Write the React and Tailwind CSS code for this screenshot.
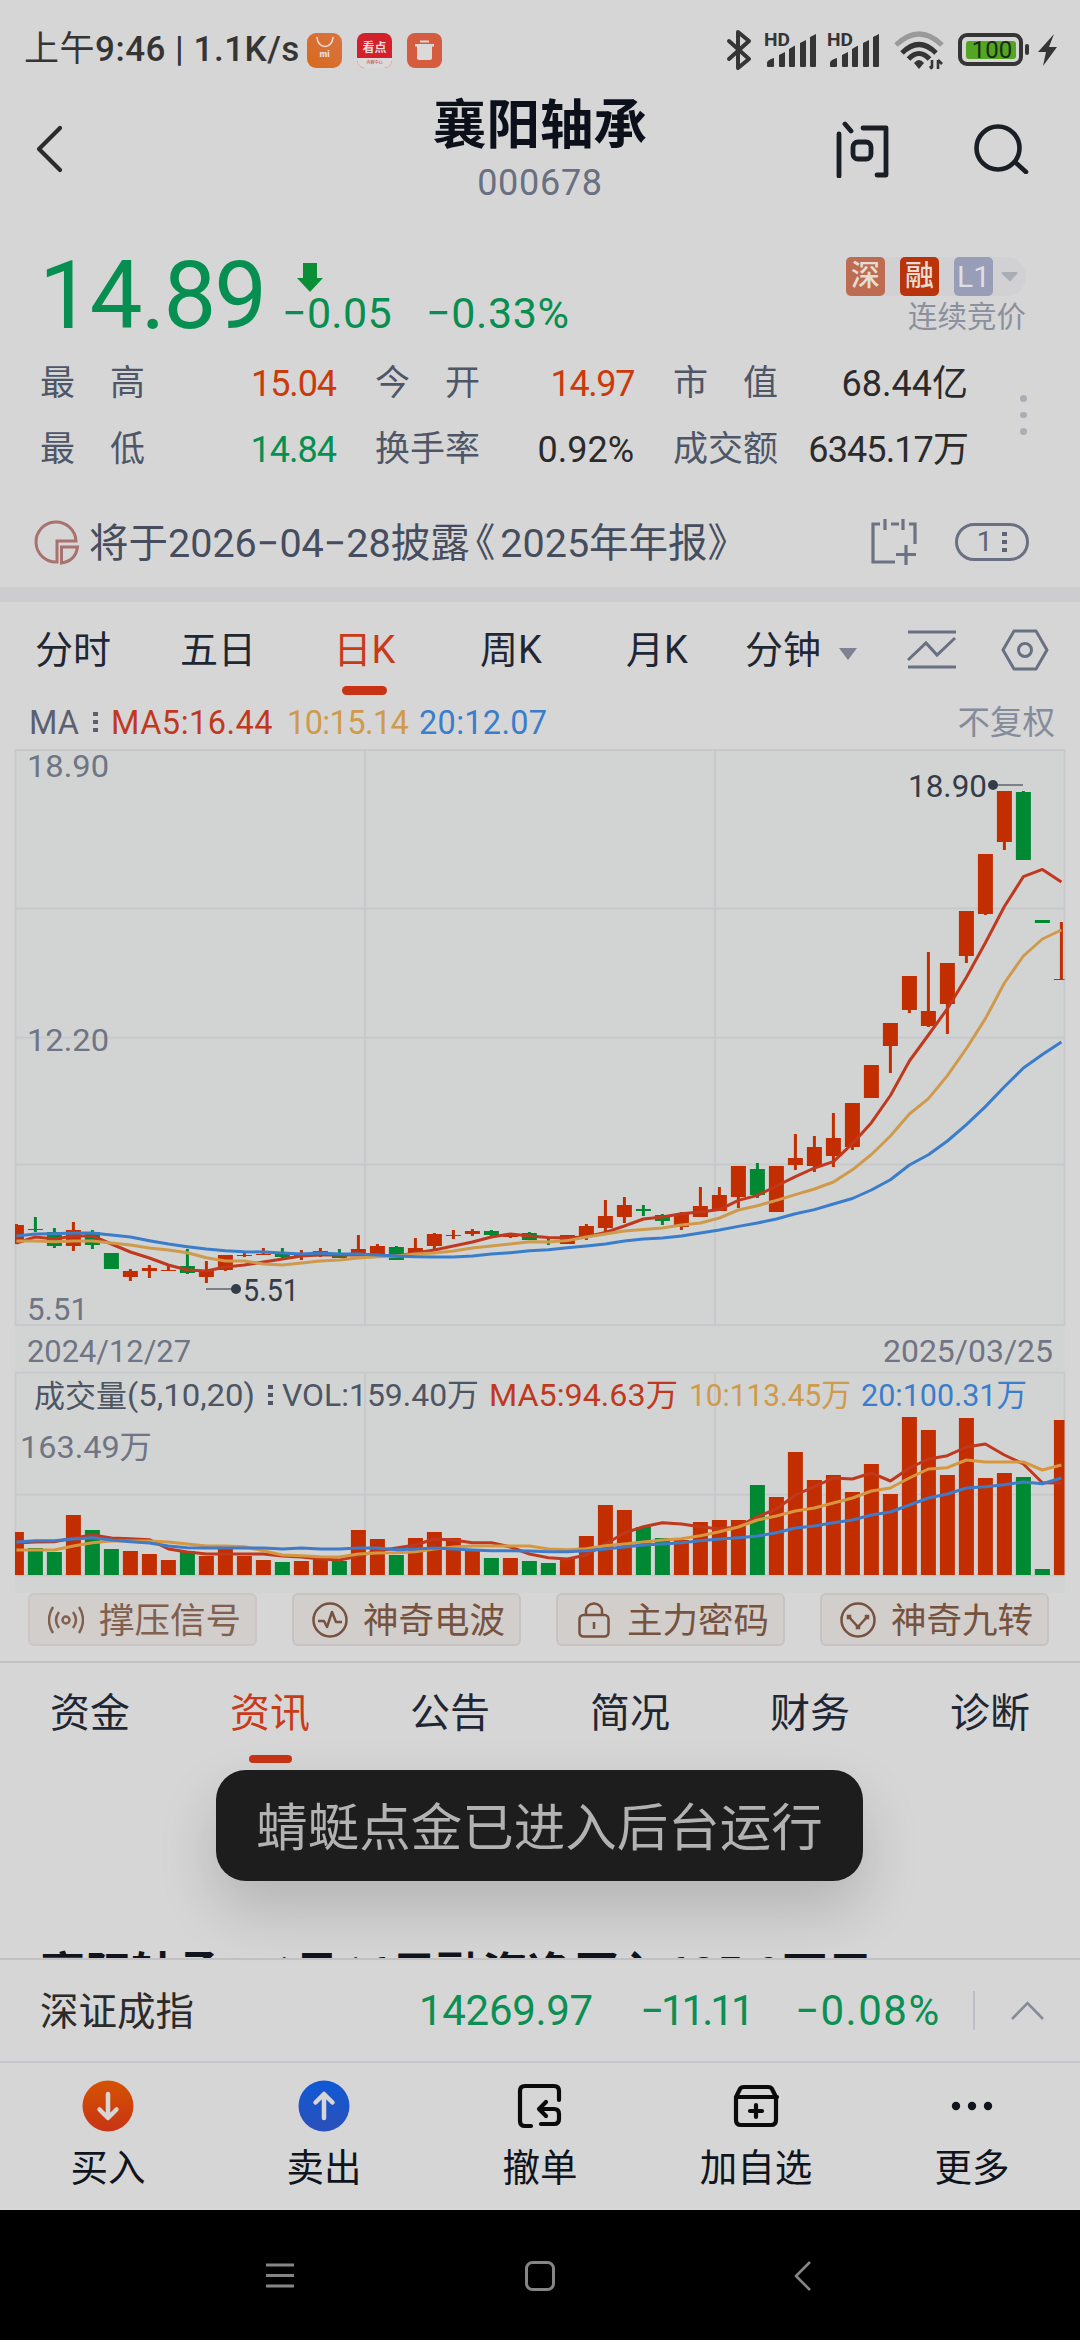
import React from "react";
import clsx from "clsx";

const RED = "#c22e00";
const GREEN = "#008833";

const STATS = [
  { label: "最　高", value: "15.04", tone: "text-[#cb3a0b] tracking-[-1.100px]" },
  { label: "今　开", value: "14.97", tone: "text-[#cb3a0b] tracking-[-1.400px]" },
  { label: "市　值", value: "68.44亿", tone: "text-[#2b2b2b]" },
  { label: "最　低", value: "14.84", tone: "text-[#068f50] tracking-[-1px]" },
  { label: "换手率", value: "0.92%", tone: "text-[#2b2b2b]" },
  { label: "成交额", value: "6345.17万", tone: "text-[#2b2b2b] tracking-[-0.900px]" },
];

// [up, wick top, body top, body bottom, wick bottom, volume top]
const BARS = [
  [1, 1224, 1225, 1241, 1244, 1532],
  [0, 1217, 1229, 1230, 1232, 1548],
  [0, 1228, 1232, 1246, 1248, 1552],
  [1, 1222, 1230, 1246, 1251, 1515],
  [0, 1230, 1232, 1245, 1249, 1530],
  [0, 1253, 1253, 1269, 1269, 1549],
  [1, 1269, 1271, 1277, 1281, 1551],
  [1, 1265, 1268, 1271, 1278, 1554],
  [1, 1265, 1270, 1271, 1271, 1560],
  [0, 1249, 1266, 1273, 1274, 1551],
  [1, 1261, 1271, 1277, 1283, 1556],
  [1, 1255, 1255, 1270, 1271, 1549],
  [1, 1253, 1255, 1256, 1257, 1556],
  [1, 1248, 1254, 1255, 1255, 1560],
  [0, 1248, 1252, 1257, 1258, 1562],
  [1, 1250, 1255, 1256, 1260, 1561],
  [1, 1248, 1251, 1253, 1257, 1558],
  [0, 1249, 1254, 1258, 1258, 1561],
  [1, 1235, 1249, 1255, 1255, 1530],
  [1, 1244, 1246, 1256, 1258, 1539],
  [0, 1246, 1247, 1260, 1260, 1555],
  [1, 1238, 1248, 1253, 1253, 1538],
  [1, 1233, 1234, 1246, 1250, 1532],
  [1, 1230, 1235, 1236, 1239, 1538],
  [1, 1229, 1231, 1234, 1236, 1551],
  [0, 1230, 1231, 1235, 1236, 1558],
  [1, 1234, 1234, 1237, 1238, 1558],
  [0, 1232, 1233, 1240, 1240, 1561],
  [0, 1238, 1241, 1242, 1245, 1563],
  [1, 1235, 1235, 1244, 1244, 1559],
  [1, 1224, 1226, 1237, 1240, 1536],
  [1, 1200, 1216, 1228, 1232, 1505],
  [1, 1197, 1205, 1217, 1223, 1510],
  [0, 1205, 1209, 1211, 1216, 1527],
  [0, 1214, 1215, 1221, 1225, 1538],
  [1, 1212, 1214, 1227, 1230, 1540],
  [1, 1187, 1206, 1217, 1217, 1522],
  [1, 1187, 1195, 1211, 1211, 1520],
  [1, 1166, 1166, 1197, 1208, 1520],
  [0, 1163, 1169, 1195, 1198, 1485],
  [1, 1166, 1166, 1212, 1212, 1497],
  [1, 1134, 1158, 1165, 1170, 1452],
  [1, 1136, 1147, 1166, 1172, 1480],
  [1, 1113, 1138, 1156, 1167, 1475],
  [1, 1103, 1103, 1147, 1150, 1492],
  [1, 1065, 1065, 1098, 1098, 1464],
  [1, 1023, 1023, 1046, 1073, 1494],
  [1, 976, 976, 1010, 1013, 1417],
  [1, 952, 1011, 1026, 1027, 1430],
  [1, 963, 963, 1004, 1034, 1475],
  [1, 911, 911, 956, 963, 1418],
  [1, 854, 854, 914, 915, 1478],
  [1, 791, 791, 842, 850, 1473],
  [0, 791, 792, 860, 860, 1477],
  [0, 920, 920, 923, 923, 1569],
  [1, 922, 979, 980, 980, 1420],
];

const PRICE_MA = {
  "#3a7dcb": [
    1236, 1234, 1233.7, 1233, 1233, 1235, 1237, 1240.7, 1244, 1246.7, 1249, 1250.7, 1251.7, 1252, 1253, 1254, 1253, 1254, 1254,
    1255, 1256, 1256.7, 1257, 1257, 1256, 1254, 1252.7, 1250.7, 1249.8, 1247.8, 1246, 1244, 1241, 1239, 1238, 1236, 1233, 1230,
    1226.4, 1223, 1219, 1213.8, 1209.6, 1204, 1198.5, 1190, 1179.7, 1165, 1154.8, 1141, 1124.6, 1106.6, 1086.7, 1068, 1054.6,
    1042,
  ],
  "#cf9a4b": [
    1241, 1241, 1241.7, 1241, 1241, 1243, 1245, 1248, 1250, 1252.7, 1257.7, 1261, 1261, 1264, 1265, 1263, 1261, 1260, 1258,
    1256.7, 1256, 1254, 1253, 1251, 1248, 1246, 1244, 1241.7, 1242, 1240.6, 1237, 1234, 1231, 1229.5, 1228, 1225, 1223, 1218,
    1210, 1205.7, 1200.4, 1194.6, 1189, 1182, 1169.8, 1154.5, 1136, 1114, 1098.6, 1075.6, 1048.5, 1018.6, 983, 956, 939, 930,
  ],
  "#c0391f": [
    1243, 1237, 1239, 1236, 1236, 1244, 1252, 1258, 1265, 1270, 1271, 1267, 1265, 1262, 1259, 1256, 1255, 1255, 1255, 1255,
    1256, 1253, 1250, 1246, 1242, 1237, 1234, 1236, 1237.6, 1238, 1236.7, 1232.5, 1226, 1219, 1217, 1213.8, 1212, 1209.6,
    1200.4, 1195.4, 1186, 1176.7, 1168, 1161.7, 1143.7, 1122.7, 1095.5, 1061, 1035, 1008.7, 977.3, 942.8, 906.5, 876.6, 869.4,
    882,
  ],
};

const VOLUME_MA = {
  "#c0391f": [
    1543, 1542, 1541.7, 1538, 1535, 1538, 1538.7, 1539.7, 1549, 1552, 1554, 1554, 1554, 1554, 1556, 1557, 1559, 1560, 1556,
    1551, 1548, 1545, 1539, 1540, 1542.7, 1542.7, 1547, 1554, 1557.7, 1559, 1555, 1544, 1533, 1526.7, 1522.7, 1524, 1526.7,
    1529, 1526.7, 1516.7, 1509, 1495, 1486.7, 1478, 1479, 1473, 1481, 1468, 1459, 1455.7, 1447, 1444, 1455, 1464, 1482.7, 1483,
  ],
  "#d6973f": [
    1550, 1550, 1550, 1546, 1542.7, 1541, 1541, 1541, 1542, 1544, 1546, 1546, 1546.7, 1550.7, 1555, 1555.7, 1556.7, 1557, 1554,
    1553, 1552.7, 1551.7, 1549, 1547, 1546, 1546, 1546, 1546, 1549, 1549.7, 1548.7, 1545.7, 1544, 1542, 1540, 1538.7, 1535.7,
    1531.7, 1527, 1520, 1516, 1511, 1508, 1503, 1498, 1491, 1488, 1478, 1469, 1467.7, 1460, 1462, 1462, 1462, 1470, 1465,
  ],
  "#3f7bc9": [
    1542, 1540.7, 1540.7, 1539, 1537.7, 1540, 1541.7, 1543, 1546, 1547.7, 1548, 1548, 1548, 1548, 1549, 1548, 1549, 1549, 1548,
    1548, 1549.7, 1549, 1548, 1549, 1550, 1550.7, 1550.7, 1551, 1551.7, 1551.7, 1550.7, 1549, 1547, 1545, 1544, 1542.7, 1540.7,
    1539, 1537.7, 1536, 1532.7, 1528, 1526, 1522.7, 1520, 1515, 1512, 1505, 1498, 1494, 1488, 1486.7, 1484.7, 1482, 1483.7,
    1478,
  ],
};

const barX = (i) => 16.4 + i * 19;
const toPoints = (ys) => ys.map((y, i) => `${barX(i)},${y}`).join(" ");

function Icon({ w, h, className, children, ...rest }) {
  return (
    <svg width={w} height={h} viewBox={`0 0 ${w} ${h}`} fill="none" className={clsx("block shrink-0", className)} {...rest}>
      {children}
    </svg>
  );
}

function Signal() {
  return (
    <Icon w={54} h={42} fill="#353535">
      <text x="0" y="17" fontSize="17.500" fontWeight="700" textLength="26" lengthAdjust="spacingAndGlyphs" fontFamily="Roboto, sans-serif">
        HD
      </text>
      <path d="M3 37v-3q0-3 7-5v8q0 1-1 1H4q-1 0-1-1zM15 37V26l6-3v14q0 1-1 1h-4q-1 0-1-1zM25 37V20l6-3.500v20.500q0 1-1 1h-4q-1 0-1-1zM36 37V14l6-3v26q0 1-1 1h-4q-1 0-1-1zM46 37V8l6-3v32q0 1-1 1h-4q-1 0-1-1z" />
    </Icon>
  );
}

function StatusBar() {
  return (
    <div className="flex h-[98px] items-center pl-[24px] pr-[23px] pt-[1px]">
      <span className="w-[283px] whitespace-nowrap text-[35px] leading-[44px] tracking-[0.500px] text-[#353535]">
        上午<span className="font-medium">9:46 | 1.1K/s</span>
      </span>
      <div className="mt-[2px] flex gap-[15px]">
        <div className="flex h-[35px] w-[35px] flex-col items-center rounded-[9px] bg-linear-to-tr from-[#d8691b] to-[#d9743f]">
          <Icon w={20} h={14} className="mt-[3px]" stroke="#ecdfd6" strokeWidth="1.600" strokeLinecap="round">
            <path d="M2 1.500c1 12 15 12 16 0" />
          </Icon>
          <span className="text-[9px] font-black leading-[8px] text-[#ecdfd6]">mi</span>
        </div>
        <div className="flex h-[35px] w-[35px] flex-col items-center overflow-hidden rounded-[8px] bg-[#d3202a]">
          <span className="mt-[6px] text-[12px] font-bold leading-[18px] text-[#f0dede]">看点</span>
          <span className="mt-[1px] w-full bg-[#dcdad9] text-center text-[4px] leading-[10px] text-[#c2272d]">内容中心</span>
        </div>
        <div className="flex h-[35px] w-[35px] items-center justify-center rounded-[8px] bg-[#d65c40]">
          <Icon w={23} h={23}>
            <path d="M7 1.500h9v2H7zM2 5h19v2.600H2z" fill="#dcdad9" />
            <path d="M4 7h15v12q0 2-2 2H6q-2 0-2-2z" fill="#dcdad9" />
          </Icon>
        </div>
      </div>
      <div className="ml-auto flex items-center">
        <Icon w={26} h={42} stroke="#353535" strokeWidth="4" strokeLinecap="round" strokeLinejoin="round">
          <path d="M3 12l20 18-11 9V3l11 9L3 30" />
        </Icon>
        <div className="ml-[12px] flex gap-[9px]">
          <Signal />
          <Signal />
        </div>
        <Icon w={50} h={40} className="ml-[13px]" strokeWidth="5">
          <path d="M2 15Q25-7 48 15" stroke="#9a9a9a" />
          <path d="M8 23Q25 6 42 23" stroke="#353535" />
          <path d="M14.500 29Q25 18 35.500 29" stroke="#353535" />
          <path d="M20 33q5-6 10 0l-5 6z" fill="#353535" />
          <path d="M38 30v8M36 36l2 3M44 39v-9M44 30l4 4" stroke="#353535" strokeWidth="2.600" />
        </Icon>
        <div className="ml-[14px] flex h-[33px] w-[65px] items-center justify-center rounded-[9px] border-4 border-[#353535]">
          <div className="h-[18px] w-[50px] rounded-[3px] bg-[#54a524] pl-[3px] text-center text-[24px] leading-[19px] text-[#182d10]">
            100
          </div>
        </div>
        <div className="ml-[2px] h-[11px] w-[4px] rounded-[2px] bg-[#353535]" />
        <Icon w={19} h={32} className="ml-[9px]">
          <path d="M16 0L0 18h8L5 32 19 13h-8z" fill="#353535" />
        </Icon>
      </div>
    </div>
  );
}

function Header() {
  return (
    <header className="grid h-[132px] grid-cols-[1fr_auto_1fr]">
      <Icon w={30} h={50} className="ml-[35px] mt-[26px]" stroke="#2b2b2b" strokeWidth="4.200" strokeLinecap="round" strokeLinejoin="round">
        <path d="M25 4L4 25l21 21" />
      </Icon>
      <div className="text-center">
        <h1 className="text-[53.500px] font-bold leading-[56px] text-[#0b101b]">襄阳轴承</h1>
        <p className="mt-[5px] text-[36px] leading-[48px] tracking-[0.700px] text-[#697082]">000678</p>
      </div>
      <div className="flex justify-end gap-[84px] pr-[51px] pt-[22px]">
        <Icon w={54} h={58} stroke="#1a1e25" strokeWidth="4.800" strokeLinecap="round" strokeLinejoin="round">
          <path d="M4 14v42M10 4l6 7M28 8h23v47H42" />
          <rect x="18" y="22" width="18" height="17" rx="5" />
        </Icon>
        <Icon w={56} h={54} stroke="#1a1e25" strokeWidth="4.600" strokeLinecap="round">
          <circle cx="25" cy="28" r="21.500" />
          <path d="M42 42l11 10" />
        </Icon>
      </div>
    </header>
  );
}

function Quote() {
  return (
    <section className="h-[357px] pt-[20px]">
      <div className="flex h-[101px] justify-between pl-[39px] pr-[54px]">
        <div className="flex text-[#068f50]">
          <span className="w-[243px] text-[94px] leading-[92px] tracking-[-2px]">14.89</span>
          <div className="pt-[13px]">
            <Icon w={26} h={29} className="ml-[15px]">
              <path d="M6 0h14v15h6L13 29 0 15h6z" fill="#0b8f36" />
            </Icon>
            <div className="flex text-[43px] leading-[42px]">
              <span className="w-[144px] tracking-[0.300px]">−0.05</span>
              <span className="tracking-[0.600px]">−0.33%</span>
            </div>
          </div>
        </div>
        <div className="pt-[7px]">
          <div className="flex items-center gap-[15px] rounded-r-full bg-[#d1d1d4]">
            <span className="flex h-[39px] w-[39px] items-center justify-center rounded-[5px] bg-[#bd6c51] text-[29px] font-medium text-[#e6dcd4]">深</span>
            <span className="flex h-[39px] w-[39px] items-center justify-center rounded-[5px] bg-[#b9330b] text-[29px] font-medium text-[#e6dcd4]">融</span>
            <span className="flex h-[39px] w-[39px] items-center justify-center rounded-[5px] bg-[#989db8] text-[30px] text-[#dedfe4]">L1</span>
            <Icon w={18} h={10} className="-ml-[7px] mr-[7px]">
              <path d="M1 0h15q1 1 0 2L9 9.500 1 2q-1-1 0-2z" fill="#a9adb6" />
            </Icon>
          </div>
          <p className="pt-[1px] text-right text-[29.500px] leading-[40px] text-[#8b909f]">连续竞价</p>
        </div>
      </div>
      <div className="flex items-center">
        <div className="grid grid-cols-[296px_259px_295px] gap-x-[39px] pl-[40px] text-[36px] leading-[66px]">
          {STATS.map((s) => (
            <div key={s.label} className="flex justify-between whitespace-nowrap">
              <span className="text-[35px] text-[#4e5667]">{s.label}</span>
              <span className={s.tone}>{s.value}</span>
            </div>
          ))}
        </div>
        <div className="-mt-[4px] ml-[52px] flex flex-col gap-[10px]">
          <i className="block size-[6.500px] rounded-full bg-[#a9adb6]" />
          <i className="block size-[6.500px] rounded-full bg-[#a9adb6]" />
          <i className="block size-[6.500px] rounded-full bg-[#a9adb6]" />
        </div>
      </div>
      <div className="mt-[26px] flex h-[66px] items-center pl-[34px] pr-[51px]">
        <Icon w={46} h={46} stroke="#a8736f" strokeWidth="3">
          <path d="M42 22A20 20 0 1 0 23 43V22z" />
          <path d="M27.500 28h16q-2 14-16 16z" />
        </Icon>
        <p className="ml-[9px] whitespace-nowrap pt-[3px] text-[39.500px] text-[#454d5e]">
          将于2026−04−28披露<span className="-ml-[14px] mr-[5px]">《</span>2025年年报》
        </p>
        <Icon w={46} h={46} className="ml-auto" stroke="#6b7283" strokeWidth="3.200">
          <path d="M9 5H2v38h22M20 5h8M38 5h6v20M14 0v11M32 0v11M35 26v20M25 35.500h20" />
        </Icon>
        <div className="ml-[38px] flex h-[38px] w-[74px] items-center justify-center gap-[10px] rounded-full border-[3px] border-[#697082] text-[28px] leading-[32px] text-[#5c6475]">
          1
          <Icon w={5} h={20}>
            <path d="M0 0h5v4H0zM0 8h5v4H0zM0 16h5v4H0z" fill="#5c6475" />
          </Icon>
        </div>
      </div>
    </section>
  );
}

function PeriodTabs() {
  return (
    <nav className="flex h-[93px] pt-[20px] text-[38px] leading-[56px] text-[#1f2634]">
      <span className="w-[145px] pl-[35px]">分时</span>
      <span className="w-[146px] pl-[35px]">五日</span>
      <div className="flex w-[147px] flex-col items-center text-[#c93a19]">
        <span className="whitespace-nowrap">日K</span>
        <i className="mt-[8px] block h-[9px] w-[45px] rounded-full bg-[#c93315]" />
      </div>
      <span className="w-[146px] text-center">周K</span>
      <span className="w-[146px] text-center">月K</span>
      <span className="pl-[15px]">分钟</span>
      <Icon w={20} h={12} className="ml-[17px] mt-[26px]">
        <path d="M1 0h18L10 12z" fill="#7d8393" />
      </Icon>
      <Icon w={50} h={40} className="ml-[49px] mt-[8px]" stroke="#697082" strokeWidth="3">
        <path d="M1 2h48M1 37h48M1 30l18-17 11 12L48 8" />
      </Icon>
      <Icon w={48} h={42} className="ml-[44px] mt-[7px]" stroke="#697082" strokeWidth="3">
        <path d="M13 2h22l11 19-11 19H13L2 21z" strokeLinejoin="round" />
        <circle cx="24" cy="21" r="6.500" />
      </Icon>
    </nav>
  );
}

function MaLegend() {
  return (
    <div className="flex h-[54px] items-center pl-[29px] pr-[25px] pt-[1px] text-[32.500px] leading-[54px]">
      <span className="w-[64px] text-[#5a6070]">MA</span>
      <Icon w={5} h={21} className="mr-[13px]">
        <path d="M0 0h5v4H0zM0 8h5v4H0zM0 16h5v4H0z" fill="#5a6070" />
      </Icon>
      <span className="w-[176px] tracking-[0.500px] text-[#c0391f]">MA5:16.44</span>
      <span className="w-[132px] tracking-[-0.600px] text-[#cf9a4b]">10:15.14</span>
      <span className="tracking-[0.300px] text-[#3a7dcb]">20:12.07</span>
      <span className="ml-auto pt-[1px] text-[#858b9a]">不复权</span>
    </div>
  );
}

function Label({ x, y, w, fill = "#6f7585", size = 32, children }) {
  return (
    <text x={x} y={y} fill={fill} fontSize={size} textLength={w} lengthAdjust="spacingAndGlyphs">
      {children}
    </text>
  );
}

function KLineChart() {
  return (
    <svg width="1080" height="844" viewBox="0 749 1080 844" className="block">
      <defs>
        <clipPath id="plot">
          <rect x="15" y="749" width="1049.500" height="844" />
        </clipPath>
      </defs>
      <rect x="15" y="749" width="1050" height="844" fill="#d2d4d3" />
      <g stroke="#c6c8cc" strokeWidth="1.800" fill="none">
        <path d="M15 750H1065M15 908.500H1065M15 1037.700H1065M15 1164.500H1065M15 1325H1065" />
        <path d="M15 1372.700H1065M15 1494.700H1065M15 1575.500H1065" />
        <path d="M365 750V1325M715 750V1325M365 1373V1575M715 1373V1575M15.500 750V1325M1064.500 750V1325M15.500 1373V1575M1064.500 1373V1575" />
      </g>
      <g clipPath="url(#plot)">
        {BARS.map(([up, high, top, bottom, low, vol], i) => (
          <g key={i} fill={up ? RED : GREEN}>
            <rect x={barX(i) - 1.5} y={high} width="3" height={low - high} />
            <rect x={barX(i) - 7.5} y={top} width="15" height={bottom - top} />
            <rect x={barX(i) - 7.5} y={vol} width="15" height={1575 - vol} />
          </g>
        ))}
        <g fill="none" strokeWidth="3" strokeLinejoin="round">
          {Object.entries(PRICE_MA).reverse().map(([color, ys]) => (
            <polyline key={color} points={toPoints(ys)} stroke={color} />
          ))}
          {Object.entries(VOLUME_MA).map(([color, ys]) => (
            <polyline key={color} points={toPoints(ys)} stroke={color} />
          ))}
        </g>
      </g>
      <path d="M996 785H1023M206 1289H234" stroke="#7d8086" strokeWidth="2" />
      <circle cx="993" cy="785" r="5" fill="#353c49" />
      <circle cx="236" cy="1289" r="5" fill="#353c49" />
      <Label x={908} y={797} w={79} fill="#353c49">18.90</Label>
      <Label x={243} y={1301} w={56} fill="#353c49">5.51</Label>
      <Label x={27} y={777} w={82}>18.90</Label>
      <Label x={27} y={1051} w={82}>12.20</Label>
      <Label x={27} y={1320} w={61}>5.51</Label>
      <Label x={27} y={1362} w={164}>2024/12/27</Label>
      <Label x={883} y={1362} w={170}>2025/03/25</Label>
      <Label x={34} y={1407} w={93} fill="#4e5564" size={31}>成交量</Label>
      <Label x={127} y={1406} w={128} fill="#4e5564">(5,10,20)</Label>
      <path d="M268 1385h5v4h-5zM268 1393h5v4h-5zM268 1401h5v4h-5z" fill="#4e5564" />
      <Label x={282} y={1406} w={197} fill="#4e5564">VOL:159.40万</Label>
      <Label x={489} y={1406} w={189} fill="#c0391f">MA5:94.63万</Label>
      <Label x={689} y={1406} w={162} fill="#cf9a4b">10:113.45万</Label>
      <Label x={861} y={1406} w={166} fill="#3a7dcb">20:100.31万</Label>
      <Label x={20} y={1458} w={132}>163.49万</Label>
    </svg>
  );
}

const SIGNALS = [
  {
    label: "撑压信号",
    soft: true,
    icon: (
      <>
        <circle cx="18" cy="18" r="3.500" />
        <path d="M11 10q-6 8 0 16M25 10q6 8 0 16M5 5q-8 13 0 26M31 5q8 13 0 26" />
      </>
    ),
  },
  {
    label: "神奇电波",
    icon: (
      <>
        <circle cx="18" cy="18" r="16.500" />
        <path d="M6 19h6l3 6 5-15 4 10h6" strokeLinejoin="round" />
      </>
    ),
  },
  {
    label: "主力密码",
    icon: (
      <>
        <rect x="3.500" y="13" width="29" height="21.500" rx="4" />
        <path d="M10 13V9a8 7.500 0 0 1 16 0v4M18 20v7" />
      </>
    ),
  },
  {
    label: "神奇九转",
    icon: (
      <>
        <circle cx="18" cy="18" r="16.500" />
        <path d="M9 15l9 10 9-10" strokeLinejoin="round" />
        <path d="M8 14h2v2H8zM17 24h2v2h-2zM26 14h2v2h-2z" />
      </>
    ),
  },
];

function SignalButtons() {
  return (
    <div className="flex h-[70px] justify-between border-b-2 border-[#c2c2c4] pl-[28px] pr-[31px]">
      {SIGNALS.map((s) => (
        <button
          key={s.label}
          className={clsx(
            "flex h-[53px] w-[229px] items-center whitespace-nowrap rounded-[6px] border-2 bg-[#d1cecc] pl-[18px]",
            s.soft ? "border-[#cbc6c5] text-[#81604f]" : "border-[#c8c3c3] text-[#76523f]"
          )}
        >
          <Icon w={36} h={36} stroke="currentColor" strokeWidth="2.500">
            {s.icon}
          </Icon>
          <span className="ml-[15px] pt-[2px] text-[35.500px] leading-[48px]">{s.label}</span>
        </button>
      ))}
    </div>
  );
}

function InfoTabs() {
  return (
    <nav className="flex h-[107px] pt-[22px] text-[40px] leading-[58px] text-[#1f2634]">
      {["资金", "资讯", "公告", "简况", "财务", "诊断"].map((tab) => (
        <div key={tab} className={clsx("flex flex-1 flex-col items-center", tab === "资讯" && "text-[#c93a19]")}>
          {tab}
          {tab === "资讯" && <i className="mt-[12px] block h-[8px] w-[43px] rounded-full bg-[#c93315]" />}
        </div>
      ))}
    </nav>
  );
}

const ACTIONS = [
  {
    label: "买入",
    icon: (
      <>
        <circle cx="26" cy="26" r="25.500" fill="url(#buy)" />
        <path d="M26 14v23M17.500 29.500L26 38l8.500-8.500" stroke="#d6d6d6" strokeWidth="4.500" />
      </>
    ),
  },
  {
    label: "卖出",
    icon: (
      <>
        <circle cx="26" cy="26" r="25.500" fill="url(#sell)" />
        <path d="M26 38V15M17.500 22.500L26 14l8.500 8.500" stroke="#d6d6d6" strokeWidth="4.500" />
      </>
    ),
  },
  {
    label: "撤单",
    icon: (
      <path d="M45 20v-9q0-5-5-5H11Q6 6 6 11v30q0 5 5 5h6M27 44h13q5 0 5-5v-5q0-5-5-5H26M32 22l-7 7 7 7" stroke="#0b0b0b" strokeWidth="4.200" />
    ),
  },
  {
    label: "加自选",
    icon: (
      <>
        <path d="M6 17h41M6 17v23q0 5 5 5h30q5 0 5-5V17l-4-8q-1-2-4-2H14q-3 0-4 2z" stroke="#0b0b0b" strokeWidth="4.200" />
        <path d="M26 25v12M20 31h12" stroke="#0b0b0b" strokeWidth="4.200" />
      </>
    ),
  },
  {
    label: "更多",
    icon: (
      <g fill="#10141d">
        <circle cx="10" cy="26" r="4.200" />
        <circle cx="26" cy="26" r="4.200" />
        <circle cx="42" cy="26" r="4.200" />
      </g>
    ),
  },
];

function ActionBar() {
  return (
    <div className="flex h-[149px] border-t-2 border-[#c6c7cc] pt-[17px]">
      <svg width="0" height="0" className="absolute">
        <defs>
          <linearGradient id="buy" x2="0" y2="1">
            <stop stopColor="#d45300" />
            <stop offset="1" stopColor="#c83415" />
          </linearGradient>
          <linearGradient id="sell" x2="0" y2="1">
            <stop stopColor="#0f59d6" />
            <stop offset="1" stopColor="#2b50b8" />
          </linearGradient>
        </defs>
      </svg>
      {ACTIONS.map((a) => (
        <button key={a.label} className="flex flex-1 flex-col items-center">
          <Icon w={52} h={52} strokeLinecap="round" strokeLinejoin="round">
            {a.icon}
          </Icon>
          <span className="mt-[11px] text-[37.500px] leading-[50px] text-[#10141d]">{a.label}</span>
        </button>
      ))}
    </div>
  );
}

export default function App() {
  return (
    <div className="relative flex h-[2340px] w-[1080px] flex-col overflow-hidden bg-[#d6d6d6] font-['Roboto','Noto_Sans_CJK_SC',sans-serif]">
      <StatusBar />
      <Header />
      <Quote />
      <div className="h-[15px] shrink-0 bg-[#cdcdcf]" />
      <PeriodTabs />
      <MaLegend />
      <KLineChart />
      <SignalButtons />
      <InfoTabs />
      <div className="h-[188px] shrink-0 overflow-hidden pl-[40px] pt-[173px]">
        <p className="whitespace-nowrap text-[45.500px] font-bold leading-[64px] text-[#10141d]">襄阳轴承：1月16日融资净买入685.9万元</p>
      </div>
      <div className="flex h-[103px] items-center border-t-2 border-[#c2c2c4] pl-[40px] pr-[36px] text-[42px] text-[#0b8f52]">
        <span className="w-[379px] pt-[2px] text-[38.500px] text-[#2b2b2b]">深证成指</span>
        <span className="w-[221px] tracking-[-0.300px]">14269.97</span>
        <span className="w-[155px] tracking-[-3px]">−11.11</span>
        <span className="tracking-[1.500px]">−0.08%</span>
        <i className="ml-auto block h-[39px] w-[2px] bg-[#bcbfc8]" />
        <Icon w={33} h={19} className="ml-[36px]" stroke="#858b9a" strokeWidth="2.600">
          <path d="M1 18L16.500 2 32 18" />
        </Icon>
      </div>
      <ActionBar />
      <div className="flex h-[130px] items-start justify-center bg-black pt-[50px]">
        <Icon w={32} h={32} stroke="#858585" strokeWidth="3">
          <path d="M2 5h28M2 15.500h28M2 26h28" />
        </Icon>
        <Icon w={32} h={32} className="mx-[228px]" stroke="#858585" strokeWidth="3">
          <rect x="2.500" y="2.500" width="27" height="27" rx="6" />
        </Icon>
        <Icon w={32} h={32} stroke="#858585" strokeWidth="2.600" strokeLinejoin="round">
          <path d="M26 2L12 16l14 14" />
        </Icon>
      </div>

      <div className="absolute left-[216px] top-[1770px] flex h-[111px] w-[647px] items-center justify-center rounded-[30px] bg-[#1d1d1e] pt-[6px] text-[51.500px] text-[#b2b2b2] shadow-[0_28px_60px_rgba(0,0,0,0.16)]">
        蜻蜓点金已进入后台运行
      </div>
    </div>
  );
}
